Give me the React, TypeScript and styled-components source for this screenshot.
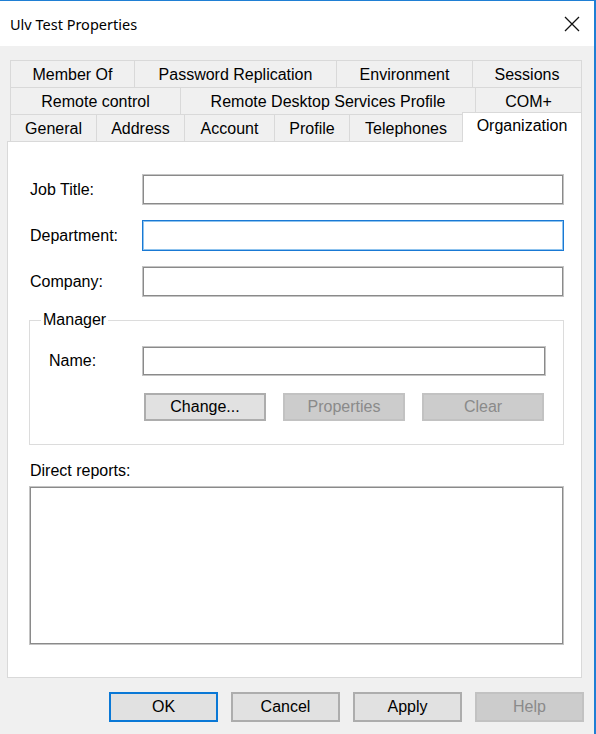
import React from "react";
import styled, { createGlobalStyle } from "styled-components";

const GlobalStyle = createGlobalStyle`
  html, body {
    margin: 0;
    padding: 0;
    background: #ffffff;
  }
  * {
    box-sizing: border-box;
  }
`;

interface ITab {
	label: string;
	width: number;
	active?: boolean;
}

const tabRows: ITab[][] = [
	[
		{ label: "Member Of", width: 124 },
		{ label: "Password Replication", width: 202 },
		{ label: "Environment", width: 136 },
		{ label: "Sessions", width: 110 },
	],
	[
		{ label: "Remote control", width: 170 },
		{ label: "Remote Desktop Services Profile", width: 295 },
		{ label: "COM+", width: 107 },
	],
	[
		{ label: "General", width: 86 },
		{ label: "Address", width: 88 },
		{ label: "Account", width: 90 },
		{ label: "Profile", width: 75 },
		{ label: "Telephones", width: 113 },
		{ label: "Organization", width: 120, active: true },
	],
];

const Window = styled.div`
	width: 596px;
	height: 734px;
	display: flex;
	flex-direction: column;
	background: #f0f0f0;
	border-top: 1px solid #1f7fd4;
	border-right: 2px solid #1f7fd4;
	font-family: "Liberation Sans", Arial, sans-serif;
	font-size: 16px;
	color: #000000;
	overflow: hidden;
`;
const TitleBar = styled.div`
	height: 45px;
	flex-shrink: 0;
	display: flex;
	align-items: center;
	justify-content: space-between;
	background: #ffffff;
	padding: 0 13px 0 10px;
`;
const Title = styled.span`
	font-family: "Noto Sans", "Open Sans", sans-serif;
	font-size: 14.5px;
	color: #000000;
`;
const CloseButton = styled.span`
	display: flex;
	width: 18px;
	height: 18px;
	align-items: center;
	justify-content: center;
`;
const Body = styled.div`
	flex: 1;
	display: flex;
	flex-direction: column;
	padding: 14px 10px 0 7px;
`;
const TabStrip = styled.div`
	display: flex;
	flex-direction: column;
	margin-left: 3px;
	width: 572px;
`;
const TabRow = styled.div`
	display: flex;
	height: 27px;
	align-items: flex-end;
`;
const Tab = styled.div<{ $width: number; $active?: boolean; $last?: boolean }>`
	position: relative;
	width: ${p => p.$width}px;
	height: ${p => (p.$active ? 30 : 27)}px;
	margin-bottom: ${p => (p.$active ? -1 : 0)}px;
	display: flex;
	align-items: center;
	justify-content: center;
	padding-top: ${p => (p.$active ? 0 : 2)}px;
	padding-bottom: ${p => (p.$active ? 4 : 0)}px;
	background: ${p => (p.$active ? "#ffffff" : "#f0f0f0")};
	border-top: 1px solid #d9d9d9;
	border-left: 1px solid #d9d9d9;
	border-right: ${p => (p.$last ? "1px solid #d9d9d9" : "none")};
	white-space: nowrap;
	z-index: ${p => (p.$active ? 1 : 0)};
`;
const Panel = styled.div`
	width: 575px;
	height: 537px;
	background: #ffffff;
	border: 1px solid #d9d9d9;
	padding: 32px 17px 0 22px;
	display: flex;
	flex-direction: column;
`;
const FieldRow = styled.div<{ $labelWidth: number }>`
	display: grid;
	grid-template-columns: ${p => p.$labelWidth}px 1fr;
	align-items: center;
	& + & {
		margin-top: 15px;
	}
`;
const Label = styled.label`
	line-height: 18px;
	white-space: nowrap;
`;
const TextBox = styled.div<{ $focused?: boolean; $height?: number }>`
	height: ${p => p.$height || 31}px;
	background: #ffffff;
	border: 1px solid ${p => (p.$focused ? "#1979d4" : "#c4c4c4")};
	box-shadow: inset 0 0 0 1px ${p => (p.$focused ? "#8fc3ee" : "#8a8a8a")};
`;
const GroupBox = styled.fieldset`
	margin: 14px 0 0 -1px;
	padding: 17px 17px 23px 19px;
	border: 1px solid #dcdcdc;
	min-width: 0;
`;
const Legend = styled.legend`
	margin-left: -8px;
	padding: 0 2px;
	line-height: 18px;
`;
const ButtonRow = styled.div<{ $indent?: number; $gap: number; $top?: number }>`
	display: flex;
	gap: ${p => p.$gap}px;
	margin-top: ${p => p.$top || 0}px;
	padding-left: ${p => p.$indent || 0}px;
`;
const Button = styled.button<{ $width: number; $height: number; $default?: boolean }>`
	width: ${p => p.$width}px;
	height: ${p => p.$height}px;
	padding: 0;
	font-family: "Liberation Sans", Arial, sans-serif;
	font-size: 16px;
	color: #000000;
	background: #e1e1e1;
	border: 2px solid ${p => (p.$default ? "#0a78d6" : "#adadad")};
	&:disabled {
		color: #8a8a8a;
		background: #cccccc;
		border-color: #c2c2c2;
	}
`;
const SectionLabel = styled.div`
	margin-top: 17px;
	line-height: 18px;
`;
const ListBox = styled.div`
	margin: 6px 0 0 -1px;
	height: 159px;
	background: #ffffff;
	border: 1px solid #c4c4c4;
	box-shadow: inset 0 0 0 1px #8a8a8a;
`;
const DialogButtons = styled.div`
	margin-top: 14px;
	display: flex;
	justify-content: flex-end;
	gap: 13px;
`;

const CloseIcon: React.FC = () => (
	<svg width="16" height="16" viewBox="0 0 16 16">
		<path d="M1 1 L15 15 M15 1 L1 15" stroke="#111111" strokeWidth="1.3" />
	</svg>
);

const App: React.FC = () => {
	return (
		<>
			<GlobalStyle />
			<Window>
				<TitleBar>
					<Title>Ulv Test Properties</Title>
					<CloseButton>
						<CloseIcon />
					</CloseButton>
				</TitleBar>
				<Body>
					<TabStrip>
						{tabRows.map((row, r) => (
							<TabRow key={r}>
								{row.map((tab, i) => (
									<Tab
										key={tab.label}
										$width={tab.width}
										$active={tab.active}
										$last={i === row.length - 1}
									>
										{tab.label}
									</Tab>
								))}
							</TabRow>
						))}
					</TabStrip>
					<Panel>
						<FieldRow $labelWidth={112}>
							<Label>Job Title:</Label>
							<TextBox />
						</FieldRow>
						<FieldRow $labelWidth={112}>
							<Label>Department:</Label>
							<TextBox $focused />
						</FieldRow>
						<FieldRow $labelWidth={112}>
							<Label>Company:</Label>
							<TextBox />
						</FieldRow>
						<GroupBox>
							<Legend>Manager</Legend>
							<FieldRow $labelWidth={93}>
								<Label>Name:</Label>
								<TextBox $height={30} />
							</FieldRow>
							<ButtonRow $indent={95} $gap={17} $top={17}>
								<Button $width={122} $height={28}>Change...</Button>
								<Button $width={122} $height={28} disabled>Properties</Button>
								<Button $width={122} $height={28} disabled>Clear</Button>
							</ButtonRow>
						</GroupBox>
						<SectionLabel>Direct reports:</SectionLabel>
						<ListBox />
					</Panel>
					<DialogButtons>
						<Button $width={109} $height={30} $default>OK</Button>
						<Button $width={109} $height={30}>Cancel</Button>
						<Button $width={109} $height={30}>Apply</Button>
						<Button $width={109} $height={30} disabled>Help</Button>
					</DialogButtons>
				</Body>
			</Window>
		</>
	);
};

export default App;
